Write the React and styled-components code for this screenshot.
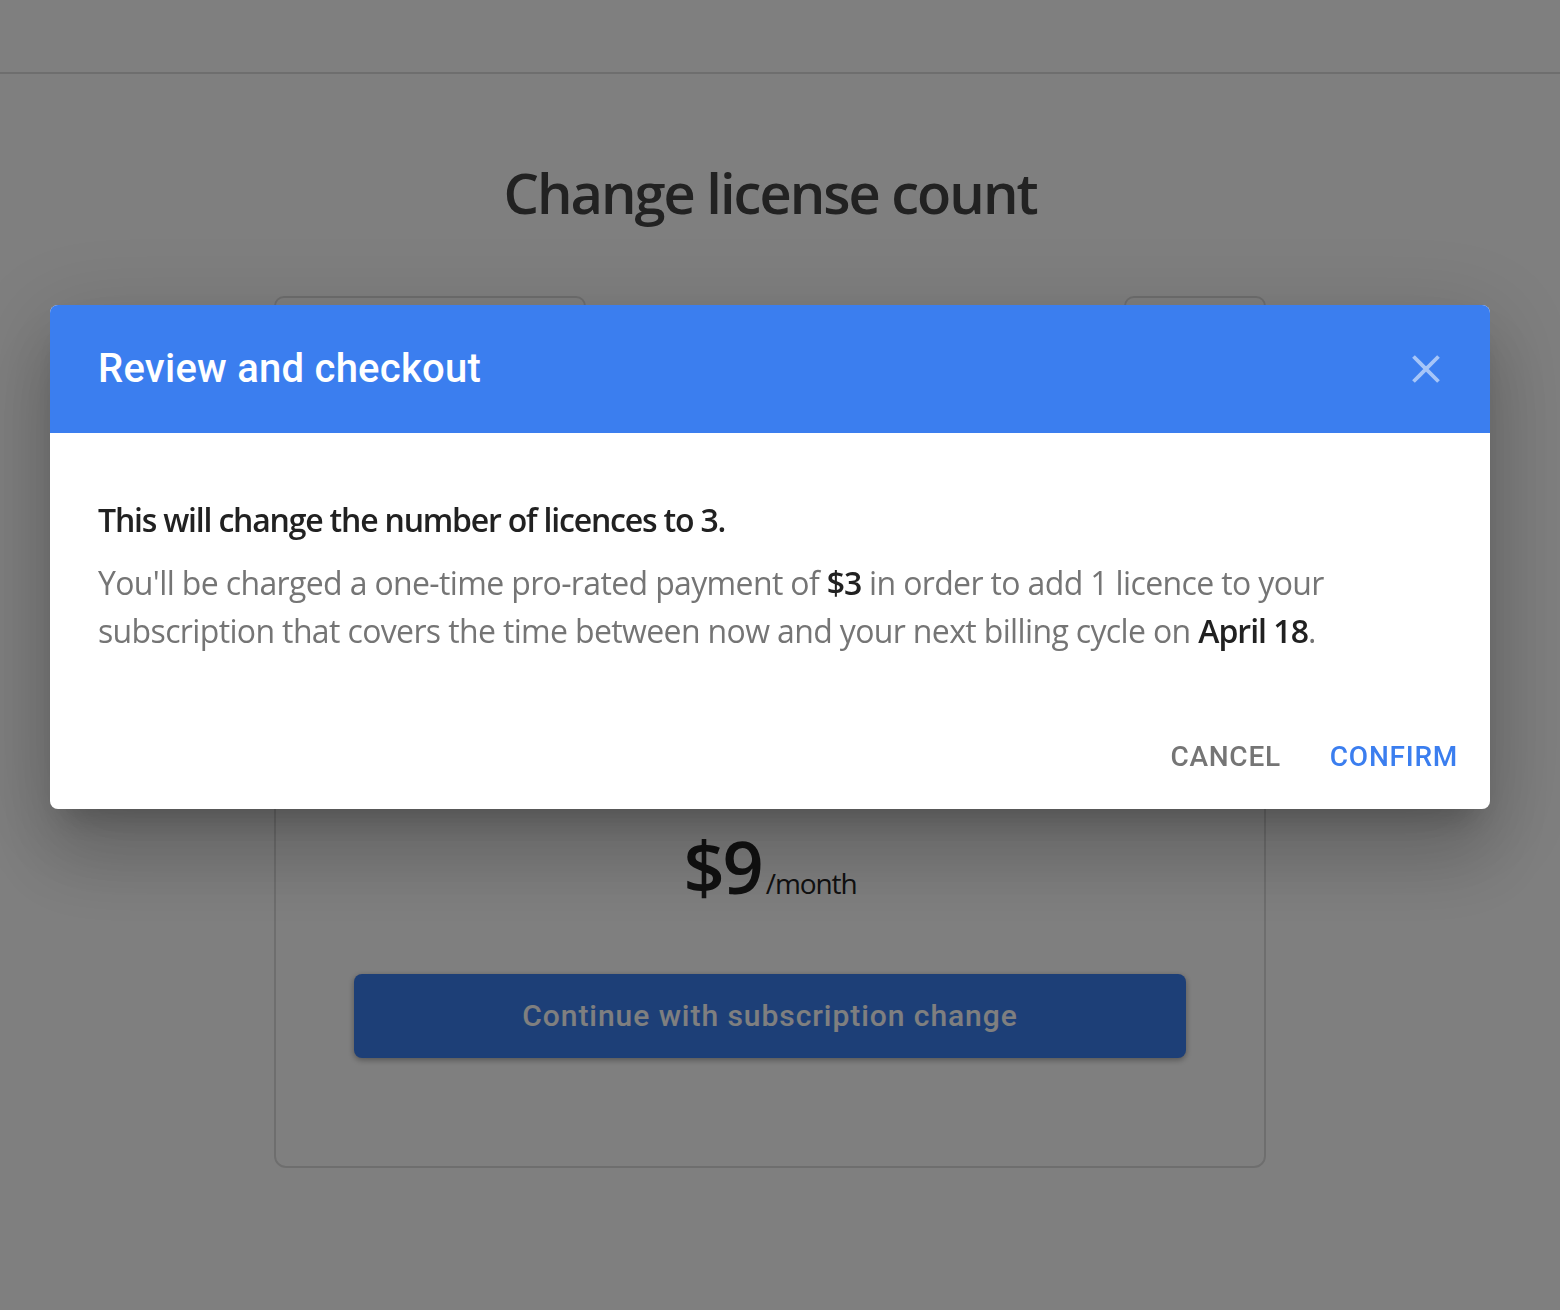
import React from 'react';
import styled, { createGlobalStyle } from 'styled-components';

const GlobalStyle = createGlobalStyle`
  html, body {
    margin: 0;
    padding: 0;
    background: #fff;
  }
  body {
    font-family: "Open Sans", "Liberation Sans", sans-serif;
  }
`;

const Page = styled.div`
  height: 1310px;
  overflow: hidden;
`;

const TopBar = styled.div`
  height: 72px;
  border-bottom: 2px solid #ddd;
`;

const Content = styled.div`
  padding-right: 20px;
`;

const Main = styled.main`
  width: 992px;
  margin: 0 auto;
`;

const Title = styled.h1`
  margin: 79px 0 0;
  height: 78px;
  font-size: 56px;
  line-height: 78px;
  font-weight: 600;
  letter-spacing: -2px;
  text-align: center;
  color: #444;
`;

const FieldRow = styled.div`
  display: flex;
  justify-content: space-between;
  margin-top: 65px;
`;

const Field = styled.div`
  box-sizing: border-box;
  width: ${(p) => p.$width}px;
  height: 84px;
  border: 2px solid #ddd;
  border-radius: 10px;
`;

const Card = styled.section`
  box-sizing: border-box;
  height: 768px;
  margin-top: 20px;
  padding-bottom: 108px;
  border: 2px solid #ddd;
  border-radius: 12px;
  display: flex;
  flex-direction: column;
  justify-content: flex-end;
  align-items: center;
`;

const Price = styled.div`
  display: flex;
  align-items: baseline;
  color: #222;
  margin-bottom: 58px;
`;

const Amount = styled.span`
  font-size: 72px;
  line-height: 100px;
  font-weight: 600;
  letter-spacing: -2px;
`;

const Period = styled.span`
  font-size: 28px;
  letter-spacing: -1.1px;
  margin-left: 4px;
`;

const ContinueButton = styled.button`
  width: 832px;
  height: 84px;
  padding: 0 0 2px;
  border: 0;
  border-radius: 8px;
  background: #3b7eef;
  color: #fff;
  font-family: Roboto, sans-serif;
  font-size: 30px;
  font-weight: 500;
  letter-spacing: 0.95px;
  box-shadow: 0 2px 6px rgba(0, 0, 0, 0.35);
`;

const Backdrop = styled.div`
  position: fixed;
  inset: 0;
  background: rgba(0, 0, 0, 0.5);
  display: flex;
  justify-content: center;
  align-items: flex-start;
  padding: 305px 20px 0 0;
`;

const Dialog = styled.div`
  width: 1440px;
  height: 504px;
  display: flex;
  flex-direction: column;
  background: #fff;
  border-radius: 8px;
  overflow: hidden;
`;

const DialogFrame = styled.div`
  border-radius: 8px;
  box-shadow: 0 22px 30px -14px rgba(0, 0, 0, 0.2), 0 48px 76px 6px rgba(0, 0, 0, 0.14), 0 18px 92px 16px rgba(0, 0, 0, 0.12);
`;

const DialogHeader = styled.header`
  height: 128px;
  box-sizing: border-box;
  flex: none;
  display: flex;
  align-items: center;
  justify-content: space-between;
  padding: 0 48px;
  background: #3b7eef;
`;

const DialogTitle = styled.h2`
  margin: 0 0 2px;
  font-family: Roboto, sans-serif;
  font-size: 40px;
  font-weight: 500;
  letter-spacing: 0.25px;
  color: #fff;
`;

const CloseButton = styled.button`
  padding: 0;
  border: 0;
  background: none;
  display: flex;
`;

const DialogBody = styled.div`
  flex: 1;
  padding: 63px 48px 0;
`;

const Lead = styled.p`
  margin: 0;
  font-size: 32px;
  line-height: 48px;
  font-weight: 600;
  letter-spacing: -1.2px;
  color: #212121;
`;

const Details = styled.p`
  margin: 15px 0 0;
  font-size: 32px;
  line-height: 48px;
  font-weight: 400;
  letter-spacing: -0.64px;
  color: #757575;
  strong {
    font-weight: 600;
    letter-spacing: -1px;
    color: #212121;
  }
`;

const DialogActions = styled.div`
  display: flex;
  justify-content: flex-end;
  gap: 49px;
  padding: 0 32px 34px 0;
`;

const ActionButton = styled.button`
  padding: 0;
  border: 0;
  background: none;
  font-family: Roboto, sans-serif;
  font-size: 28px;
  line-height: 36px;
  font-weight: 500;
  letter-spacing: 0.75px;
  color: ${(p) => (p.$primary ? '#3b7eef' : '#757575')};
`;

function App() {
  return (
    <>
      <GlobalStyle />
      <Page>
        <TopBar />
        <Content>
          <Main>
            <Title>Change license count</Title>
            <FieldRow>
              <Field $width={312} />
              <Field $width={142} />
            </FieldRow>
            <Card>
              <Price>
                <Amount>$9</Amount>
                <Period>/month</Period>
              </Price>
              <ContinueButton>Continue with subscription change</ContinueButton>
            </Card>
          </Main>
        </Content>
      </Page>
      <Backdrop>
        <DialogFrame>
          <Dialog>
            <DialogHeader>
              <DialogTitle>Review and checkout</DialogTitle>
              <CloseButton aria-label="Close">
                <svg width="32" height="32" viewBox="0 0 32 32">
                  <path d="M3.5 3.5 L28.5 28.5 M28.5 3.5 L3.5 28.5" stroke="#fff" strokeOpacity="0.55" strokeWidth="3.8" fill="none" />
                </svg>
              </CloseButton>
            </DialogHeader>
            <DialogBody>
              <Lead>This will change the number of licences to 3.</Lead>
              <Details>
                You'll be charged a one-time pro-rated payment of <strong>$3</strong> in order to add 1 licence to your
                subscription that covers the time between now and your next billing cycle on <strong>April 18</strong>.
              </Details>
            </DialogBody>
            <DialogActions>
              <ActionButton>CANCEL</ActionButton>
              <ActionButton $primary>CONFIRM</ActionButton>
            </DialogActions>
          </Dialog>
        </DialogFrame>
      </Backdrop>
    </>
  );
}

export default App;
